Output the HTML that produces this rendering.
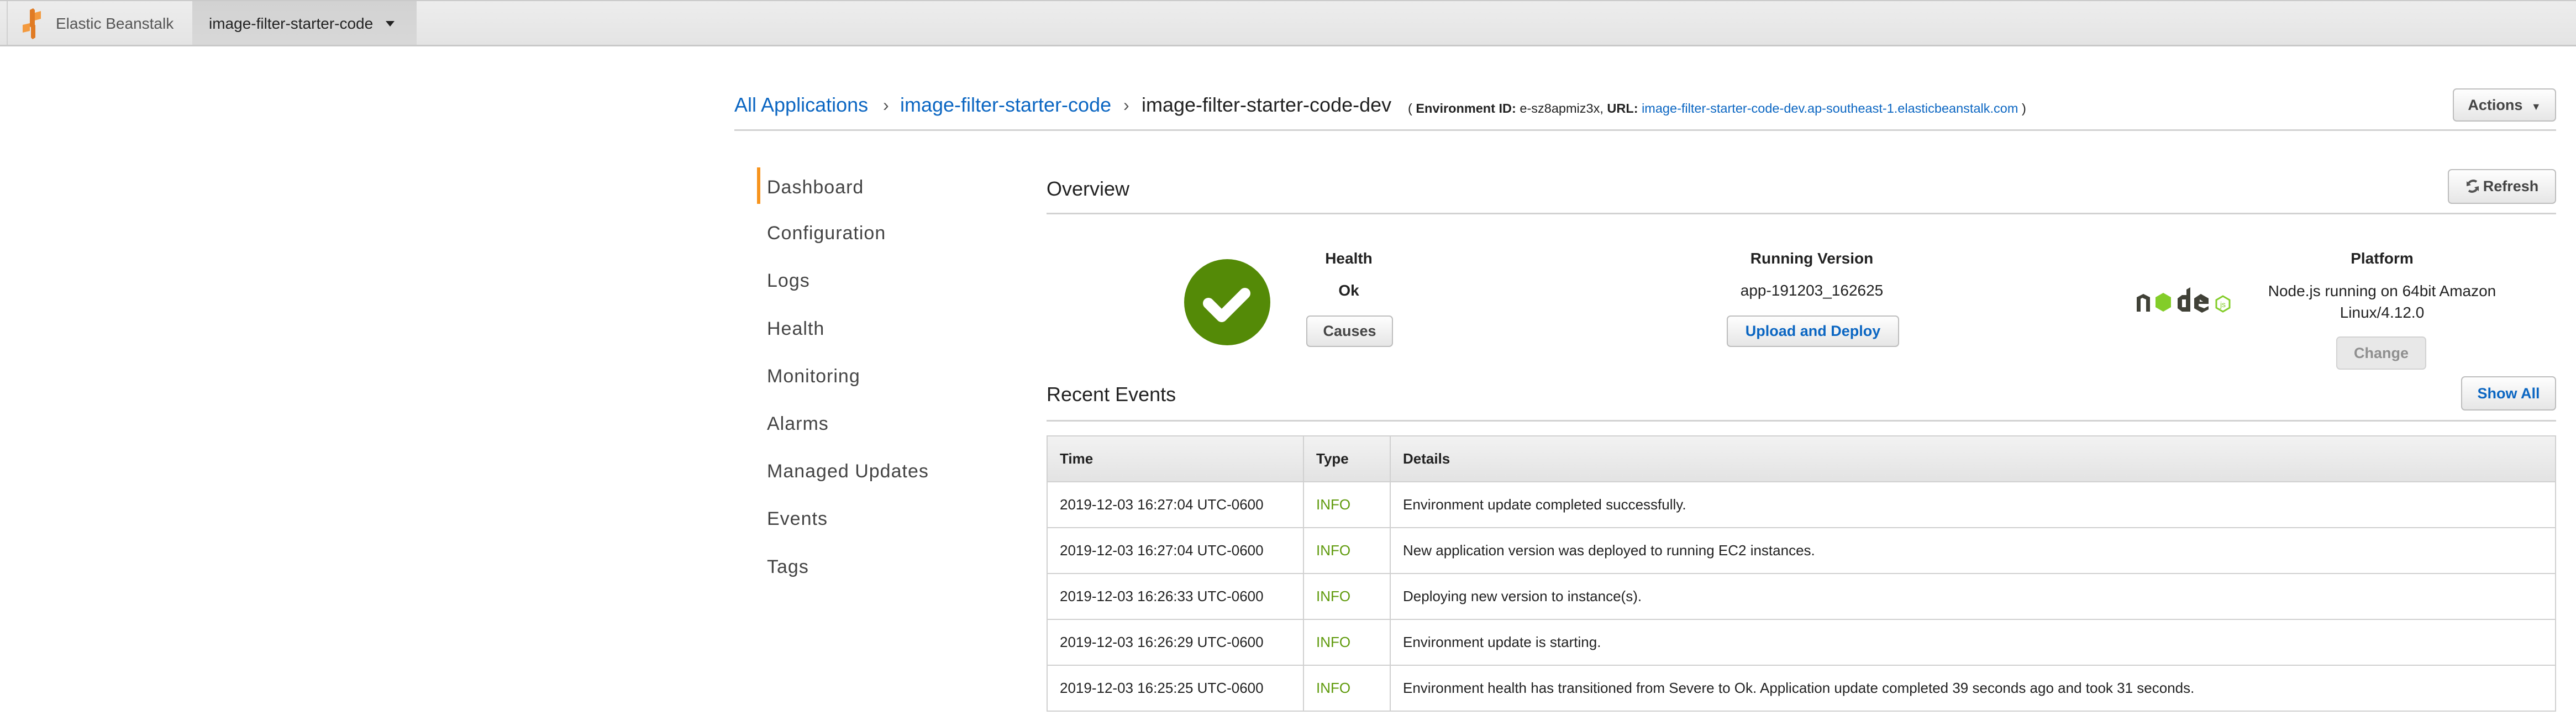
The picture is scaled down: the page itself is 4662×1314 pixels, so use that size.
<!DOCTYPE html>
<html><head><meta charset="utf-8">
<style>
*{margin:0;padding:0;box-sizing:border-box}
body{width:4662px;height:1314px;background:#fff;font-family:"Liberation Sans",Arial,sans-serif;position:relative;overflow:hidden;color:#222}
.a{position:absolute;white-space:nowrap}
.ctr{text-align:center}
.btn{position:absolute;border:2px solid #bdbdbd;border-radius:7px;background:linear-gradient(#fefefe,#e6e6e6);font-weight:bold;font-size:27px;color:#444;text-align:center;white-space:nowrap}
.side{font-size:34px;letter-spacing:1px;color:#444;left:1388px;line-height:40px}
table{position:absolute;left:1894px;top:788px;width:2732px;border-collapse:collapse;font-size:26px}
td,th{border:2px solid #d0d0d0;padding:0 0 0 22px;text-align:left;height:83px}
th{background:linear-gradient(#f2f2f2,#e3e3e3);font-weight:bold;color:#222}
.info{color:#5f9a0c}
</style></head><body>

<!-- top bar -->
<div class="a" style="left:0;top:0;width:4662px;height:84px;background:linear-gradient(#ededed,#e4e4e4);border-top:2px solid #c9c9c9;border-bottom:3px solid #c9c9c9"></div>
<div class="a" style="left:12px;top:2px;width:2px;height:79px;background:#d0d0d0"></div>
<svg class="a" style="left:38px;top:14px" width="44" height="58" viewBox="0 0 44 58">
<polygon points="16,4 22,1 25,4 25,34 20,37 16,34" fill="#e07b24"/>
<polygon points="25,9 36,6 36,20 25,23" fill="#f39a3f"/>
<polygon points="3,31 16,28 16,42 3,45" fill="#f39a3f"/>
<polygon points="18,34 26,31 26,54 21,57 18,54" fill="#e07b24"/>
</svg>
<div class="a" style="left:101px;top:27px;font-size:28px;color:#555;line-height:32px">Elastic Beanstalk</div>
<div class="a" style="left:348px;top:2px;width:406px;height:79px;background:linear-gradient(#d2d2d2,#d8d8d8)"></div>
<div class="a" style="left:378px;top:27px;font-size:28px;color:#222;line-height:32px">image-filter-starter-code</div>
<div class="a" style="left:698px;top:38px;width:0;height:0;border-left:8px solid transparent;border-right:8px solid transparent;border-top:10px solid #222"></div>

<!-- breadcrumb -->
<div class="a" style="left:1329px;top:168px;font-size:36px;line-height:44px;color:#0b66c2">All Applications</div>
<div class="a" style="left:1598px;top:168px;font-size:32px;line-height:44px;color:#555">›</div>
<div class="a" style="left:1629px;top:168px;font-size:36px;line-height:44px;color:#0b66c2">image-filter-starter-code</div>
<div class="a" style="left:2033px;top:168px;font-size:32px;line-height:44px;color:#555">›</div>
<div class="a" style="left:2066px;top:168px;font-size:36px;line-height:44px;color:#222">image-filter-starter-code-dev</div>
<div class="a" style="left:2548px;top:181px;font-size:23.5px;line-height:30px;color:#222">( <b>Environment ID:</b> e-sz8apmiz3x, <b>URL:</b> <span style="color:#0b66c2">image-filter-starter-code-dev.ap-southeast-1.elasticbeanstalk.com</span> )</div>
<div class="a" style="left:1329px;top:234px;width:3297px;height:3px;background:#d2d2d2"></div>
<div class="btn" style="left:4439px;top:160px;width:187px;height:60px;line-height:56px">Actions <span style="font-size:18px;margin-left:8px">▼</span></div>

<!-- sidebar -->
<div class="a" style="left:1370px;top:303px;width:6px;height:66px;background:#f7941d"></div>
<div class="a side" style="top:319px">Dashboard</div>
<div class="a side" style="top:402px">Configuration</div>
<div class="a side" style="top:488px">Logs</div>
<div class="a side" style="top:575px">Health</div>
<div class="a side" style="top:661px">Monitoring</div>
<div class="a side" style="top:747px">Alarms</div>
<div class="a side" style="top:833px">Managed Updates</div>
<div class="a side" style="top:919px">Events</div>
<div class="a side" style="top:1006px">Tags</div>

<!-- overview -->
<div class="a" style="left:1894px;top:320px;font-size:36px;line-height:44px;color:#222">Overview</div>
<div class="a" style="left:1894px;top:385px;width:2732px;height:3px;background:#d2d2d2"></div>
<div class="btn" style="left:4430px;top:306px;width:196px;height:63px;line-height:59px"><svg width="26" height="28" viewBox="0 0 26 28" style="vertical-align:-5px;margin-right:6px"><path d="M20 6 A10 10 0 0 0 5 10" fill="none" stroke="#555" stroke-width="4"/><polygon points="2,5 10,12 2,14" fill="#555"/><path d="M6 22 A10 10 0 0 0 21 18" fill="none" stroke="#555" stroke-width="4"/><polygon points="24,23 16,16 24,14" fill="#555"/></svg>Refresh</div>

<svg class="a" style="left:2143px;top:469px" width="156" height="156" viewBox="0 0 156 156"><circle cx="78" cy="78" r="78" fill="#548a07"/><path d="M44 80 L68 104 L110 62" fill="none" stroke="#fff" stroke-width="20" stroke-linecap="round" stroke-linejoin="round"/></svg>

<div class="a ctr" style="left:2291px;width:300px;top:451px;font-size:28px;line-height:34px;font-weight:bold">Health</div>
<div class="a ctr" style="left:2291px;width:300px;top:509px;font-size:28px;line-height:34px;font-weight:bold">Ok</div>
<div class="btn" style="left:2364px;top:571px;width:157px;height:57px;line-height:53px">Causes</div>

<div class="a ctr" style="left:3079px;width:400px;top:451px;font-size:28px;line-height:34px;font-weight:bold">Running Version</div>
<div class="a ctr" style="left:3079px;width:400px;top:509px;font-size:28px;line-height:34px">app-191203_162625</div>
<div class="btn" style="left:3125px;top:571px;width:312px;height:57px;line-height:53px;color:#0b66c2">Upload and Deploy</div>

<svg class="a" style="left:3865px;top:520px" width="190" height="52" viewBox="0 0 190 52">
<path d="M2 18 L14 12 L26 18 L26 44 L19 44 L19 22 L12 19 L9 21 L9 44 L2 44 Z" fill="#404137"/>
<polygon points="50,10 64,18 64,36 50,44 36,36 36,18" fill="#83cd29"/>
<path d="M92 4 L99 0 L99 44 L84 44 L76 38 L76 20 L84 14 L92 14 Z M84 22 L84 36 L91 36 L91 22 Z" fill="#404137"/>
<path d="M118 12 L132 20 L132 30 L114 30 L114 34 L124 38 L132 34 L132 40 L120 46 L106 38 L106 20 Z M116 22 L116 26 L122 26 Z" fill="#404137"/>
<polygon points="158,16 170,23 170,37 158,44 146,37 146,23" fill="none" stroke="#83cd29" stroke-width="3"/>
<text x="158" y="36" font-size="14" font-family="Liberation Sans" fill="#83cd29" text-anchor="middle">js</text>
</svg>

<div class="a ctr" style="left:4111px;width:400px;top:451px;font-size:28px;line-height:34px;font-weight:bold">Platform</div>
<div class="a ctr" style="left:4061px;width:500px;top:507px;font-size:28px;line-height:39px">Node.js running on 64bit Amazon<br>Linux/4.12.0</div>
<div class="btn" style="left:4228px;top:609px;width:163px;height:60px;line-height:56px;background:#e8e8e8;color:#8f8f8f;border-color:#d2d2d2">Change</div>

<!-- recent events -->
<div class="a" style="left:1894px;top:692px;font-size:36px;line-height:44px;color:#222">Recent Events</div>
<div class="a" style="left:1894px;top:760px;width:2732px;height:3px;background:#d2d2d2"></div>
<div class="btn" style="left:4454px;top:681px;width:172px;height:62px;line-height:58px;color:#0b66c2">Show All</div>

<table>
<tr><th style="width:464px">Time</th><th style="width:157px">Type</th><th>Details</th></tr>
<tr><td>2019-12-03 16:27:04 UTC-0600</td><td class="info">INFO</td><td>Environment update completed successfully.</td></tr>
<tr><td>2019-12-03 16:27:04 UTC-0600</td><td class="info">INFO</td><td>New application version was deployed to running EC2 instances.</td></tr>
<tr><td>2019-12-03 16:26:33 UTC-0600</td><td class="info">INFO</td><td>Deploying new version to instance(s).</td></tr>
<tr><td>2019-12-03 16:26:29 UTC-0600</td><td class="info">INFO</td><td>Environment update is starting.</td></tr>
<tr><td>2019-12-03 16:25:25 UTC-0600</td><td class="info">INFO</td><td>Environment health has transitioned from Severe to Ok. Application update completed 39 seconds ago and took 31 seconds.</td></tr>
</table>

</body></html>
